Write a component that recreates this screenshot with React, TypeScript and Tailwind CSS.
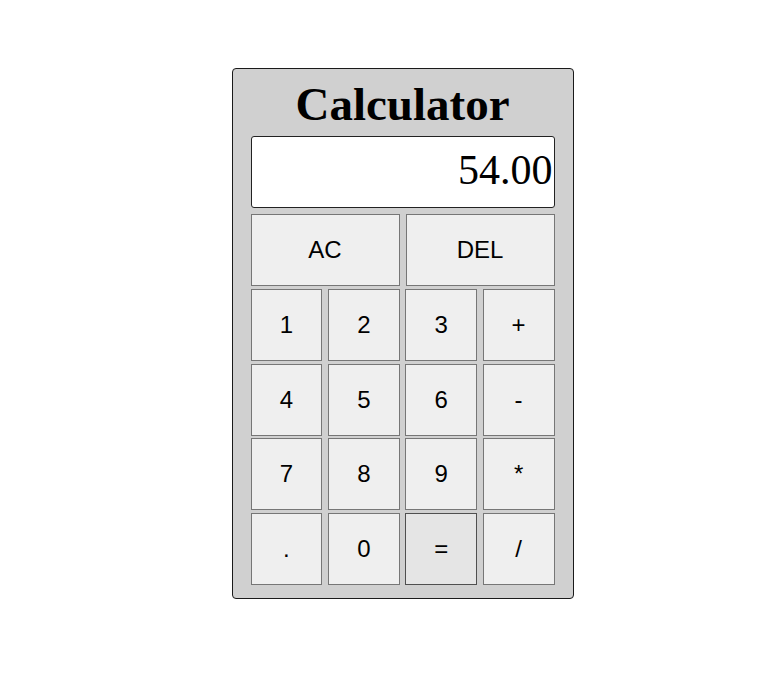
import React, { useState } from 'react';

const keys: string[] = ['1', '2', '3', '+', '4', '5', '6', '-', '7', '8', '9', '*', '.', '0', '=', '/'];

const App: React.FC = () => {
  const [value] = useState<string>('54.00');

  const keyClass = (k: string) =>
    k === '='
      ? 'h-[72px] bg-[#e5e5e5] border border-[#4f4f4f] text-black text-[24px]'
      : 'h-[72px] bg-[#efefef] border border-[#767676] text-black text-[24px]';

  return (
    <div className="min-h-[696px] bg-white flex justify-center pl-[24px] pt-[68px] font-['Liberation_Sans',Arial,sans-serif]">
      <div className="w-[342px] h-[531px] bg-[#d0d0d0] border border-[#1a1a1a] rounded-[4px] px-[18px] pt-[11px] pb-[13px] flex flex-col">
        <div className="h-[49px] leading-[48px] text-center text-[47px] font-bold text-black font-['Liberation_Serif','Times_New_Roman',serif]">
          Calculator
        </div>
        <div className="mt-[7px] h-[72px] bg-white border border-[#222] rounded-[3px] text-right pr-[1px] text-[42px] leading-[66px] text-black font-['Liberation_Serif','Times_New_Roman',serif]">
          {value}
        </div>
        <div className="mt-[6px] grid grid-cols-2 gap-x-[6px]">
          <button className="h-[72px] bg-[#efefef] border border-[#767676] text-black text-[24px]">AC</button>
          <button className="h-[72px] bg-[#efefef] border border-[#767676] text-black text-[24px]">DEL</button>
        </div>
        <div className="mt-[3px] grid grid-cols-4 gap-x-[5.5px] gap-y-[2.5px]">
          {keys.map((k) => (
            <button key={k} className={keyClass(k)}>
              {k}
            </button>
          ))}
        </div>
      </div>
    </div>
  );
};

export default App;
